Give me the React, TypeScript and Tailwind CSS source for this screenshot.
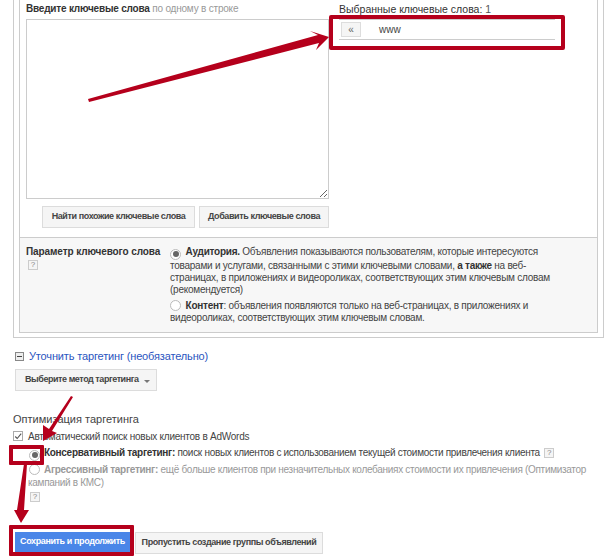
import React from 'react';

const Help = () => (
  <span className="inline-flex w-[10px] h-[10px] items-center justify-center border border-[#ccc] bg-[#f5f5f5] text-[8px] leading-none tracking-normal text-[#888]">?</span>
);

const Radio = ({ checked }: { checked?: boolean }) => (
  <span className="inline-flex w-[11px] h-[11px] mr-[2px] align-[-2px] items-center justify-center rounded-full border border-[#bbb] bg-white">
    {checked && <span className="w-[6px] h-[6px] rounded-full bg-[#666]" />}
  </span>
);

const GrayButton = ({ children, className }: { children: React.ReactNode; className?: string }) => (
  <button className={`flex items-center justify-center whitespace-nowrap border border-[#dcdcdc] bg-[#f5f5f5] text-[9px] tracking-[-0.4px] font-bold text-[#444] ${className ?? ''}`}>
    {children}
  </button>
);

// red annotations drawn over the screenshot
const Annotations = () => (
  <>
    <div className="absolute left-[329px] top-[15px] w-[236px] h-[35px] border-[4px] border-[#b5001c] rounded-[2px]" />
    <div className="absolute left-[9px] top-[445px] w-[35px] h-[20px] border-[4px] border-[#b5001c] rounded-[1px]" />
    <div className="absolute left-[9px] top-[525px] w-[125px] h-[31px] border-[4px] border-[#b5001c] rounded-[1px]" />
    <svg className="absolute left-0 top-0" width="604" height="559" viewBox="0 0 604 559">
      <path d="M88 99 L318 35 L310 31 L329 37 L316 50 L319 43 L89 102 Z" fill="#b5001c" />
      <path d="M71 396 L49 429 L43 425 L43 441 L57 433 L52 431 L73 397 Z" fill="#b5001c" />
      <path d="M24 464 L17 510 L14 510 L21 523 L29 510 L24 510 L27 464 Z" fill="#b5001c" />
    </svg>
  </>
);

export default function App() {
  return (
    <div className="relative w-[604px] h-[559px] overflow-hidden bg-white font-['Liberation_Sans',Arial,sans-serif] text-[10px] tracking-[-0.25px] text-[#333]">
      {/* outer panel */}
      <div className="ml-[13px] w-[591px] h-[338px] border-x border-b border-[#ccc] px-[5px] pb-[4px]">
        <div className="h-[333px] border-x border-b border-[#ccc] flex flex-col">
          <div className="flex h-[238px] shrink-0 border-b border-[#ccc] pl-[6px] pt-[3px]">
            <div className="w-[303px]">
              <div className="h-[16px] leading-[12px] tracking-[-0.2px] whitespace-nowrap">
                <span className="font-bold text-[#333]">Введите ключевые слова</span>{' '}
                <span className="text-[#999]">по одному в строке</span>
              </div>
              <textarea className="block w-[303px] h-[180px] border border-[#ccc] bg-white" />
              <div className="flex justify-end gap-[4px] mt-[7px]">
                <GrayButton className="w-[153px] h-[22px]">Найти похожие ключевые слова</GrayButton>
                <GrayButton className="w-[130px] h-[22px]">Добавить ключевые слова</GrayButton>
              </div>
            </div>
            <div className="ml-[10px] w-[216px]">
              <div className="h-[16px] leading-[12px] text-[#333] text-[10.5px] tracking-normal whitespace-nowrap">
                Выбранные ключевые слова: <span className="text-[#555]">1</span>
              </div>
              <div className="flex items-center h-[21px] border-y border-[#ccc] pl-[2px]">
                <button className="w-[20px] h-[15px] border border-[#ddd] bg-[#f5f5f5] text-[10px] leading-[10px] text-[#666]">«</button>
                <span className="ml-[18px] text-[#444] tracking-normal">www</span>
              </div>
            </div>
          </div>
          <div className="flex flex-1 bg-[#f7f7f7] pl-[6px] pt-[8px] leading-[12px]">
            <div className="w-[144px] whitespace-nowrap">
              <div className="font-bold text-[#333] tracking-[-0.1px]">Параметр ключевого слова</div>
              <div className="mt-[2px] ml-[2px] flex"><Help /></div>
            </div>
            <div className="w-[400px] text-[#444] whitespace-nowrap">
              <p>
                <Radio checked /> <b className="text-[#333]">Аудитория.</b> Объявления показываются пользователям, которые интересуются<br />
                товарами и услугами, связанными с этими ключевыми словами, <b className="text-[#333]">а также</b> на веб-<br />
                страницах, в приложениях и видеороликах, соответствующих этим ключевым словам<br />
                (рекомендуется)
              </p>
              <p className="mt-[4px]">
                <Radio /> <b className="text-[#333]">Контент</b>: объявления появляются только на веб-страницах, в приложениях и<br />
                видеороликах, соответствующих этим ключевым словам.
              </p>
            </div>
          </div>
        </div>
      </div>

      {/* refine targeting */}
      <div className="ml-[15px] mt-[11px] flex items-center h-[14px]">
        <span className="flex w-[9px] h-[9px] items-center justify-center border border-[#888] bg-[#eee]">
          <span className="w-[5px] h-px bg-[#444]" />
        </span>
        <span className="ml-[5px] text-[11px] tracking-[-0.15px] text-[#2a55c0]">Уточнить таргетинг (необязательно)</span>
      </div>
      <button className="ml-[15px] mt-[6px] flex items-center w-[142px] h-[22px] pl-[9px] border border-[#dcdcdc] bg-[#f5f5f5] text-[9px] tracking-[-0.45px] font-bold text-[#444] whitespace-nowrap">
        Выберите метод таргетинга
        <span className="ml-[5px] mt-[2px] w-0 h-0 border-x-[3px] border-t-[3px] border-x-transparent border-t-[#777]" />
      </button>

      {/* optimisation */}
      <div className="ml-[13px] mt-[20px] h-[16px] text-[11px] tracking-normal leading-[16px] text-[#444]">Оптимизация таргетинга</div>
      <div className="ml-[13px] mt-[2px] flex items-center h-[14px] text-[#444]">
        <span className="flex w-[10px] h-[10px] items-center justify-center border border-[#aaa] bg-white">
          <svg width="10" height="9" viewBox="0 0 10 9"><path d="M1.5 4.5 L4 7 L9 1" fill="none" stroke="#555" strokeWidth="1.4" /></svg>
        </span>
        <span className="ml-[5px]">Автоматический поиск новых клиентов в AdWords</span>
      </div>
      <div className="ml-[29px] mt-[3px] h-[14px] leading-[14px] whitespace-nowrap tracking-[-0.3px] text-[#444]">
        <Radio checked /><span className="ml-[2px]" /><b className="text-[#333]">Консервативный таргетинг:</b> поиск новых клиентов с использованием текущей стоимости привлечения клиента <span className="ml-[2px] inline-flex align-[1px]"><Help /></span>
      </div>
      <div className="ml-[29px] mt-[3px] leading-[13px] whitespace-nowrap tracking-[-0.3px] text-[#999]">
        <Radio /><span className="ml-[2px]" /><b>Агрессивный таргетинг:</b> ещё больше клиентов при незначительных колебаниях стоимости их привлечения (Оптимизатор<br />
        <span className="-ml-[1px]">кампаний в КМС)</span>
      </div>
      <div className="ml-[30px] mt-[3px] flex"><Help /></div>

      {/* actions */}
      <div className="absolute left-[15px] top-[532px] flex gap-[5px]">
        <button className="w-[115px] h-[20px] bg-[#4a86e8] text-[9px] tracking-[-0.4px] font-bold text-white whitespace-nowrap">Сохранить и продолжить</button>
        <GrayButton className="w-[188px] h-[22px]">Пропустить создание группы объявлений</GrayButton>
      </div>

      <Annotations />
    </div>
  );
}
